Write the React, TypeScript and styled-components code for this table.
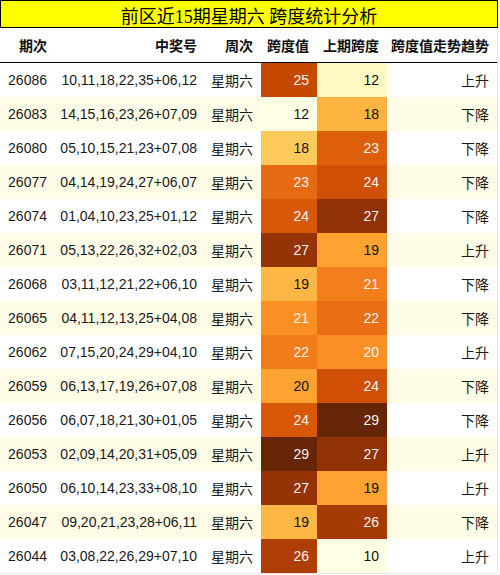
import styled, { createGlobalStyle } from "styled-components";

const GlobalStyle = createGlobalStyle`
  body {
    margin: 0;
    background: #fff;
    font-family: "Liberation Sans", "Noto Sans CJK SC", sans-serif;
  }
`;

const rows = [
  ["26086", "10,11,18,22,35+06,12", 25, 12, "上升"],
  ["26083", "14,15,16,23,26+07,09", 12, 18, "下降"],
  ["26080", "05,10,15,21,23+07,08", 18, 23, "下降"],
  ["26077", "04,14,19,24,27+06,07", 23, 24, "下降"],
  ["26074", "01,04,10,23,25+01,12", 24, 27, "下降"],
  ["26071", "05,13,22,26,32+02,03", 27, 19, "上升"],
  ["26068", "03,11,12,21,22+06,10", 19, 21, "下降"],
  ["26065", "04,11,12,13,25+04,08", 21, 22, "下降"],
  ["26062", "07,15,20,24,29+04,10", 22, 20, "上升"],
  ["26059", "06,13,17,19,26+07,08", 20, 24, "下降"],
  ["26056", "06,07,18,21,30+01,05", 24, 29, "下降"],
  ["26053", "02,09,14,20,31+05,09", 29, 27, "上升"],
  ["26050", "06,10,14,23,33+08,10", 27, 19, "上升"],
  ["26047", "09,20,21,23,28+06,11", 19, 26, "下降"],
  ["26044", "03,08,22,26,29+07,10", 26, 10, "上升"],
] as const;

// YlOrBr stops
const stops = [
  "#ffffe5", "#fff7bc", "#fee391", "#fec44f", "#fe9929",
  "#ec7014", "#cc4c02", "#993404", "#662506",
];

const hex = (c: string) => [1, 3, 5].map((i) => parseInt(c.slice(i, i + 2), 16));

const heat = (t: number) => {
  const p = Math.max(0, Math.min(1, t)) * (stops.length - 1);
  const i = Math.min(Math.floor(p), stops.length - 2);
  const f = p - i;
  const a = hex(stops[i]);
  const b = hex(stops[i + 1]);
  const m = a.map((v, k) => Math.round(v + (b[k] - v) * f));
  return `rgb(${m.join(",")})`;
};

const spanVals = rows.map((r) => r[2]);
const prevVals = rows.map((r) => r[3]);
const range = (vals: readonly number[]) => [Math.min(...vals), Math.max(...vals)];
const [spanMin, spanMax] = range(spanVals);
const [prevMin, prevMax] = range(prevVals);

const COLS = "55px 150px 56px 56px 70px 110px";

const Wrap = styled.div`
  width: 498px;
`;

const Title = styled.div`
  height: 26px;
  border: 1px solid #000;
  background: #ffff00;
  display: flex;
  align-items: center;
  justify-content: center;
  padding-top: 1px;
  box-sizing: border-box;
  height: 28px;
  font-family: "Liberation Serif", "Noto Sans CJK SC", serif;
  font-size: 18px;
  color: #000;
`;

const Table = styled.div`
  border-right: 1px solid #e6e6e6;
  border-bottom: 1px solid #e6e6e6;
`;

const HeadRow = styled.div`
  display: grid;
  grid-template-columns: ${COLS};
  height: 34px;
  border-bottom: 1.5px solid #000;
`;

const HeadCell = styled.div`
  display: flex;
  align-items: center;
  justify-content: flex-end;
  padding-right: 8px;
  font-size: 14px;
  font-weight: bold;
  color: #111;
`;

const Row = styled.div<{ $alt: boolean }>`
  display: grid;
  grid-template-columns: ${COLS};
  height: 34px;
  background: ${(p) => (p.$alt ? "#fefbe6" : "#ffffff")};
`;

const Cell = styled.div`
  display: flex;
  align-items: center;
  justify-content: flex-end;
  padding-right: 8px;
  font-size: 14px;
  color: #1a1a1a;
`;

const HeatCell = styled(Cell)<{ $dark: boolean }>`
  color: ${(p) => (p.$dark ? "#f4f4f4" : "#111")};
`;

const heads = ["期次", "中奖号", "周次", "跨度值", "上期跨度", "跨度值走势趋势"];

export default function App() {
  return (
    <Wrap>
      <GlobalStyle />
      <Title>前区近15期星期六 跨度统计分析</Title>
      <Table>
        <HeadRow>
          {heads.map((h) => (
            <HeadCell key={h}>{h}</HeadCell>
          ))}
        </HeadRow>
        {rows.map(([issue, nums, span, prev, trend], i) => {
          const ts = (span - spanMin) / (spanMax - spanMin);
          const tp = (prev - prevMin) / (prevMax - prevMin);
          return (
            <Row key={issue} $alt={i % 2 === 1}>
              <Cell>{issue}</Cell>
              <Cell>{nums}</Cell>
              <Cell>星期六</Cell>
              <HeatCell $dark={ts > 0.5} style={{ background: heat(ts) }}>
                {span}
              </HeatCell>
              <HeatCell $dark={tp > 0.5} style={{ background: heat(tp) }}>
                {prev}
              </HeatCell>
              <Cell>{trend}</Cell>
            </Row>
          );
        })}
      </Table>
    </Wrap>
  );
}
